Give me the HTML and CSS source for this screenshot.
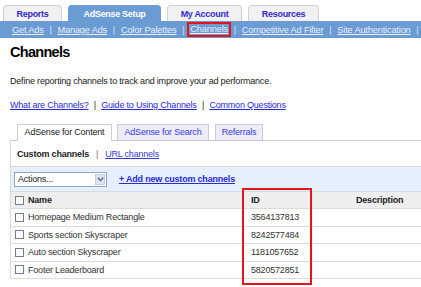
FILE: index.html
```html
<!DOCTYPE html>
<html>
<head>
<meta charset="utf-8">
<link rel="stylesheet" href="styles.css">
</head>
<body>
<div class="top-tabs">
  <div class="ttab t1">Reports</div>
  <div class="ttab t2 active">AdSense Setup</div>
  <div class="ttab t3">My Account</div>
  <div class="ttab t4">Resources</div>
</div>
<div class="subnav">
  <a>Get Ads</a><span class="sep">|</span>
  <a>Manage Ads</a><span class="sep">|</span>
  <a>Color Palettes</a><span class="sep">|</span>
  <a class="hl">Channels</a><span class="sep">|</span>
  <a>Competitive Ad Filter</a><span class="sep">|</span>
  <a>Site Authentication</a><span class="sep">|</span>
</div>
<div class="main">
  <h1>Channels</h1>
  <p class="desc">Define reporting channels to track and improve your ad performance.</p>
  <p class="links"><a>What are Channels?</a><span class="sep">|</span><a>Guide to Using Channels</a><span class="sep">|</span><a>Common Questions</a></p>
  <div class="ctabs">
    <div class="ctab c1 sel">AdSense for Content</div>
    <div class="ctab c2">AdSense for Search</div>
    <div class="ctab c3">Referrals</div>
  </div>
  <div class="panel">
    <div class="chanbar"><b>Custom channels</b><span class="sep2">|</span><a>URL channels</a></div>
    <div class="actions">
      <div class="select"><span>Actions...</span><span class="arrow"><svg width="7" height="5" viewBox="0 0 7 5"><path d="M0.8 0.8 L3.5 3.6 L6.2 0.8" fill="none" stroke="#4d6c96" stroke-width="1.4"/></svg></span></div>
      <a class="add">+ Add new custom channels</a>
    </div>
    <div class="table">
      <div class="row head"><div class="c-name"><span class="cb"></span>Name</div><div class="c-id">ID</div><div class="c-desc">Description</div></div>
      <div class="row"><div class="c-name"><span class="cb"></span>Homepage Medium Rectangle</div><div class="c-id">3564137813</div><div class="c-desc"></div></div>
      <div class="row"><div class="c-name"><span class="cb"></span>Sports section Skyscraper</div><div class="c-id">8242577484</div><div class="c-desc"></div></div>
      <div class="row"><div class="c-name"><span class="cb"></span>Auto section Skyscraper</div><div class="c-id">1181057652</div><div class="c-desc"></div></div>
      <div class="row"><div class="c-name"><span class="cb"></span>Footer Leaderboard</div><div class="c-id">5820572851</div><div class="c-desc"></div></div>
      <div class="idbox"></div>
    </div>
  </div>
</div>
</body>
</html>
```
FILE: styles.css
```css
* { box-sizing: border-box; }
body {
  margin: 0;
  font-family: "Liberation Sans", Arial, sans-serif;
  font-size: 9px;
  letter-spacing: -0.2px;
  color: #222;
  background: #fff;
  width: 421px;
  height: 287px;
  overflow: hidden;
}
a { text-decoration: underline; cursor: pointer; }

/* top tabs */
.top-tabs {
  display: flex;
  gap: 6px;
  padding: 5px 0 0 3px;
  height: 21px;
}
.ttab {
  height: 16px;
  border: 1px solid #d2d2d2;
  border-bottom: none;
  border-radius: 4px 4px 0 0;
  background: #f1f1f1;
  color: #3329cf;
  font-weight: bold;
  font-size: 9px;
  letter-spacing: -0.3px;
  line-height: 15px;
  padding-top: 1px;
  text-align: center;
  white-space: nowrap;
}
.t1 { width: 59px; }
.t2 { width: 93px; }
.t3 { width: 75px; }
.t4 { width: 71px; }
.ttab.active {
  background: #6a9bd3;
  border-color: #6a9bd3;
  color: #fff;
}

/* sub navigation */
.subnav {
  height: 17px;
  background: #6a9bd3;
  display: flex;
  align-items: center;
  padding-left: 12px;
  font-size: 9.2px;
  letter-spacing: -0.15px;
  white-space: nowrap;
  overflow: hidden;
}
.subnav a, .subnav .sep { flex: none; }
.subnav a { color: #e8eff9; }
.subnav .sep { margin: 0 5.8px; color: #dce6f4; }
.subnav a.hl {
  display: inline-block;
  border: 2px solid #e4141b;
  padding: 0 1.5px;
  margin: 0 -3.5px;
  height: 15px;
  line-height: 11px;
}

/* main content */
.main { padding-left: 10px; }
h1 {
  margin: 6px 0 0;
  font-size: 14.5px;
  letter-spacing: -0.7px;
  line-height: 16px;
  font-weight: bold;
  color: #000;
}
.desc { margin: 15px 0 0; line-height: 12px; color: #222; }
.links { margin: 12px 0 0; line-height: 12px; }
.links a { color: #2a2ad6; }
.links .sep { margin: 0 5.3px; color: #333; }

/* content tabs */
.ctabs {
  display: flex;
  gap: 5px;
  padding-left: 7px;
  margin-top: 13px;
  height: 16px;
}
.ctab {
  height: 16px;
  border: 1px solid #cdcdd6;
  border-bottom: none;
  background: #eeecf9;
  color: #3b3be0;
  line-height: 15px;
  text-align: center;
  white-space: nowrap;
}
.c1 { width: 95px; }
.c2 { width: 92px; }
.c3 { width: 48px; margin-left: 1px; }
.ctab.sel {
  background: #fff;
  color: #222;
  height: 17px;
  position: relative;
  z-index: 1;
}

/* panel */
.panel {
  border-top: 1px solid #cfcfcf;
  border-left: 1px solid #dadada;
  width: 411px;
}
.chanbar {
  height: 26px;
  border-bottom: 1px solid #d8d8d8;
  display: flex;
  align-items: center;
  padding-left: 6px;
}
.chanbar b { color: #222; }
.chanbar .sep2 { margin: 0 7px; color: #a25d84; }
.chanbar a { color: #3b3be0; }

.actions {
  height: 25px;
  background: #e5f0fc;
  border-bottom: 1px solid #d6dbe2;
  display: flex;
  align-items: center;
  padding-left: 3px;
}
.select {
  width: 93px;
  height: 15px;
  border: 1px solid #8ea8c9;
  background: #fff;
  display: flex;
  align-items: center;
  justify-content: space-between;
  padding-left: 3px;
  padding-right: 1px;
  color: #222;
}
.arrow {
  width: 10px;
  height: 11px;
  background: #dce5f1;
  border: 1px solid #c3d0e2;
  display: flex;
  align-items: center;
  justify-content: center;
}
.add {
  margin-left: 12px;
  color: #2a2ad6;
  font-weight: bold;
}

/* table */
.table { position: relative; }
.row {
  display: flex;
  height: 17.5px;
  align-items: center;
  border-bottom: 1px solid #dcdcdc;
}
.row.head {
  background: #eeeeee;
  height: 17px;
  font-weight: bold;
  color: #222;
}
.c-name {
  width: 240px;
  display: flex;
  align-items: center;
  padding-left: 4px;
  color: #333;
}
.head .c-name, .head .c-id, .head .c-desc { color: #222; }
.c-id { width: 105px; color: #333; }
.c-desc { flex: 1; }
.cb {
  width: 9px;
  height: 9px;
  border: 1px solid #6f7f94;
  background: #fff;
  margin-right: 4px;
  flex: none;
}
.idbox {
  position: absolute;
  left: 231px;
  top: -4px;
  width: 70px;
  height: 97px;
  border: 2px solid #e4141b;
}
```
